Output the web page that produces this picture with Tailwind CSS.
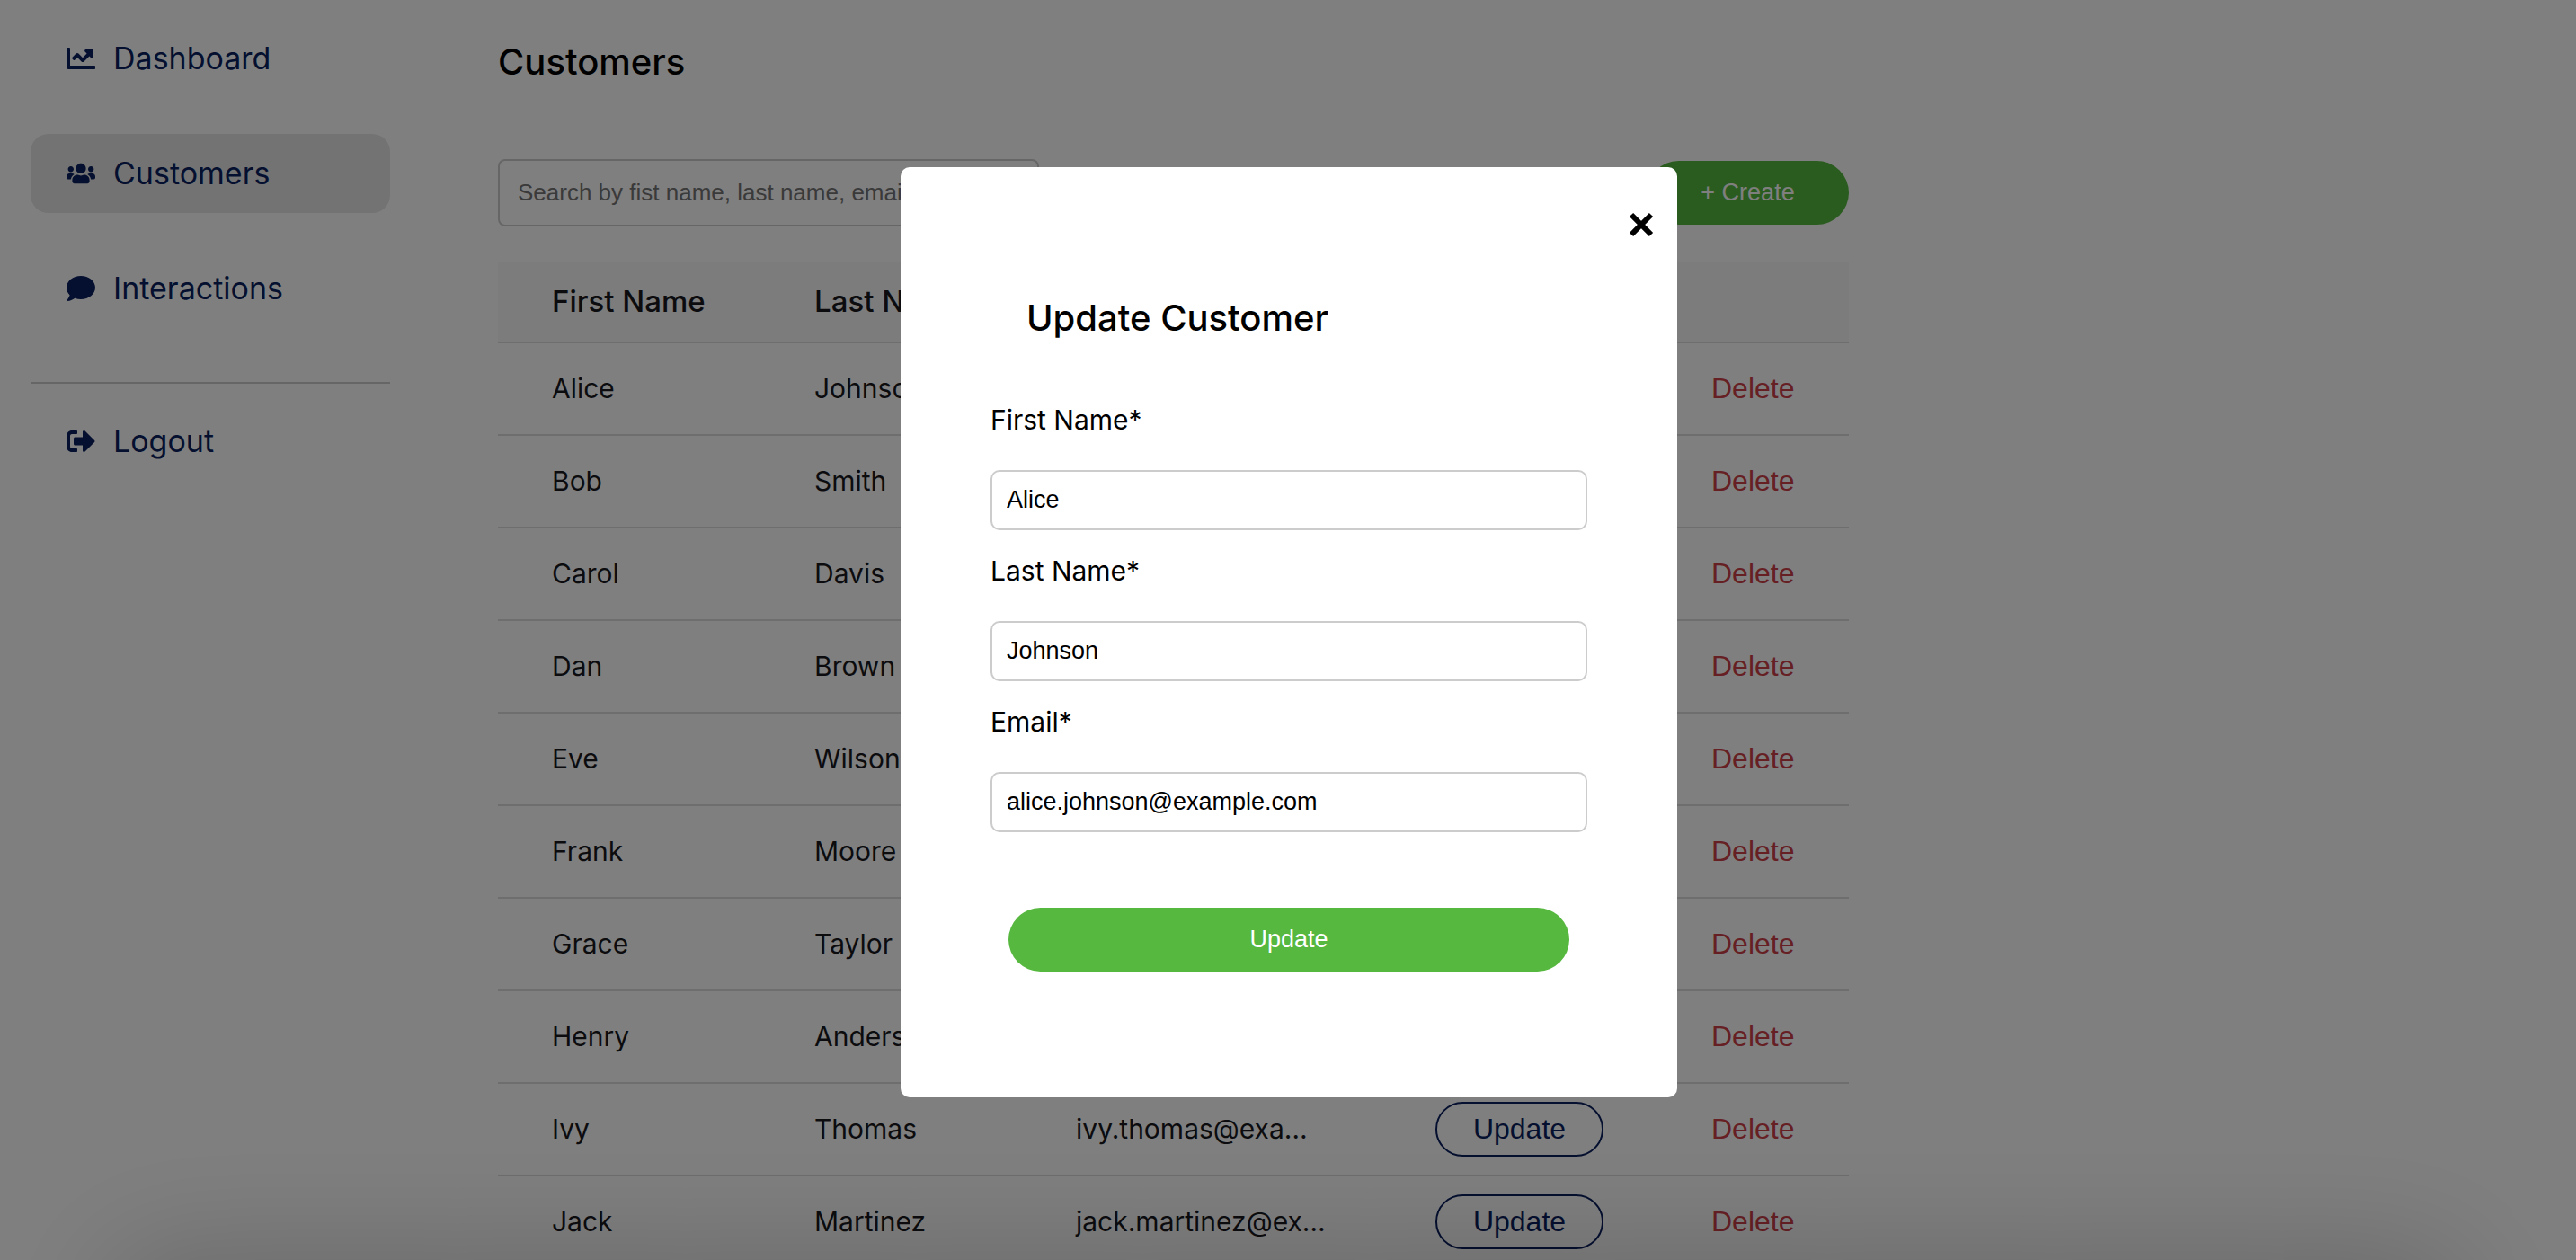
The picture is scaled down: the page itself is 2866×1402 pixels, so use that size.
<!DOCTYPE html>
<html lang="en">
<head>
<meta charset="utf-8">
<meta name="viewport" content="width=device-width, initial-scale=1">
<title>Customers</title>
<script src="https://cdn.jsdelivr.net/npm/@tailwindcss/browser@4"></script>
</head>
<body class="h-screen overflow-hidden bg-white font-[Inter,'Open_Sans',sans-serif] text-black">
<div class="flex items-start">
  <nav class="flex w-[468px] shrink-0 flex-col px-[34px] pt-[21px] text-[34px] leading-10 text-[#0a1f5e]">
    <a href="#" class="flex h-[88px] items-center gap-5 rounded-[20px] px-10">
      <svg class="size-8 shrink-0" viewBox="0 0 512 512" fill="currentColor"><path d="M496 384H64V80c0-8.84-7.16-16-16-16H16C7.16 64 0 71.16 0 80v336c0 17.67 14.33 32 32 32h464c8.84 0 16-7.16 16-16v-32c0-8.84-7.16-16-16-16zM464 96H345.94c-21.38 0-32.09 25.85-16.97 40.97l32.4 32.4L288 242.75l-73.37-73.37c-12.5-12.5-32.76-12.5-45.25 0l-68.69 68.69c-6.25 6.25-6.25 16.38 0 22.63l22.62 22.62c6.25 6.25 16.38 6.25 22.63 0L192 237.25l73.37 73.37c12.5 12.5 32.76 12.5 45.25 0l96-96 32.4 32.4c15.12 15.12 40.97 4.41 40.97-16.97V112c.01-8.84-7.15-16-15.99-16z"/></svg>
      Dashboard</a>
    <a href="#" class="mt-10 flex h-[88px] items-center gap-5 rounded-[20px] bg-[#e6e6e6] px-10">
      <svg class="size-8 shrink-0" viewBox="0 0 640 512" fill="currentColor"><path d="M96 224c35.3 0 64-28.7 64-64s-28.7-64-64-64-64 28.7-64 64 28.7 64 64 64zm448 0c35.3 0 64-28.7 64-64s-28.7-64-64-64-64 28.7-64 64 28.7 64 64 64zm32 32h-64c-17.6 0-33.5 7.1-45.1 18.6 40.3 22.1 68.9 62 75.1 109.4h66c17.7 0 32-14.3 32-32v-32c0-35.3-28.7-64-64-64zm-256 0c61.9 0 112-50.1 112-112S381.9 32 320 32 208 82.1 208 144s50.1 112 112 112zm76.8 32h-8.3c-20.8 10-43.9 16-68.5 16s-47.6-6-68.5-16h-8.3C179.6 288 128 339.6 128 403.2V432c0 26.5 21.5 48 48 48h288c26.5 0 48-21.5 48-48v-28.8c0-63.6-51.6-115.2-115.2-115.2zm-223.7-13.4C161.5 263.1 145.6 256 128 256H64c-35.3 0-64 28.7-64 64v32c0 17.7 14.3 32 32 32h65.9c6.3-47.4 34.9-87.3 75.2-109.4z"/></svg>
      Customers</a>
    <a href="#" class="mt-10 flex h-[88px] items-center gap-5 rounded-[20px] px-10">
      <svg class="size-8 shrink-0" viewBox="0 0 512 512" fill="currentColor"><path d="M256 32C114.6 32 0 125.1 0 240c0 49.6 21.4 95 57 130.7C44.5 421.1 2.7 466 2.2 466.5c-2.2 2.3-2.8 5.7-1.5 8.7S4.8 480 8 480c66.3 0 116-31.8 140.6-51.4 32.7 12.3 69 19.4 107.4 19.4 141.4 0 256-93.1 256-208S397.4 32 256 32z"/></svg>
      Interactions</a>
    <hr class="mt-[60px] mb-5 border-t-2 border-[#ccc]">
    <a href="#" class="flex h-[88px] items-center gap-5 rounded-[20px] px-10">
      <svg class="size-8 shrink-0" viewBox="0 0 512 512" fill="currentColor"><path d="M497 273L329 441c-15 15-41 4.5-41-17v-96H152c-13.3 0-24-10.7-24-24v-96c0-13.3 10.7-24 24-24h136V88c0-21.4 25.9-32 41-17l168 168c9.3 9.4 9.3 24.6 0 34zM192 436v-40c0-6.6-5.4-12-12-12H96c-17.7 0-32-14.3-32-32V160c0-17.7 14.3-32 32-32h84c6.6 0 12-5.4 12-12V76c0-6.6-5.4-12-12-12H96c-53 0-96 43-96 96v192c0 53 43 96 96 96h84c6.6 0 12-5.4 12-12z"/></svg>
      Logout</a>
  </nav>
  <main class="ml-[86px] w-full max-w-[1503px] pt-10">
    <h1 class="text-[40px] leading-[58px] font-medium">Customers</h1>
    <div class="mt-[79px] flex items-center justify-between">
      <input type="search" aria-label="Search customers" placeholder="Search by fist name, last name, email" class="h-[75px] w-[602px] rounded-lg border-2 border-[#ccc] px-5 font-['Liberation_Sans',Arial,sans-serif] text-[26px] placeholder:text-[#757575]">
      <button type="button" class="h-[71px] w-[225px] rounded-full bg-[#56b83f] font-['Liberation_Sans',Arial,sans-serif] text-[27px] text-white">+ Create</button>
    </div>
    <table class="mt-[39px] w-full table-fixed border-collapse text-left text-[30px] text-[#18191f]">
      <colgroup><col class="w-[292px]"><col class="w-[291px]"><col class="w-[400px]"><col class="w-[307px]"><col></colgroup>
      <thead>
        <tr class="h-[90px] border-b-2 border-[#ddd] bg-[#f8f8f8] text-[33px]">
          <th scope="col" class="pl-[60px] font-medium">First Name</th>
          <th scope="col" class="pl-[60px] font-medium">Last Name</th>
          <th scope="col" class="pl-[60px] font-medium">Email</th>
          <td></td><td></td>
        </tr>
      </thead>
      <tbody id="rows"></tbody>
    </table>
  </main>
</div>

<template id="row">
  <tr class="h-[103px] border-b-2 border-[#ddd]">
    <td class="pl-[60px]"></td>
    <td class="pl-[60px]"></td>
    <td class="truncate px-[60px]"></td>
    <td class="px-[60px]"><button type="button" class="block h-[61px] w-[187px] rounded-full border-2 border-[#0a1f5e] pb-0.5 font-['Liberation_Sans',Arial,sans-serif] text-[32px] text-[#0a1f5e]">Update</button></td>
    <td class="pb-0.5 pl-[60px]"><button type="button" class="block font-['Liberation_Sans',Arial,sans-serif] text-[32px] text-[#cc4048]">Delete</button></td>
  </tr>
</template>

<div class="fixed inset-0 flex items-start justify-center bg-black/50 pt-[186px] pl-0.5">
  <div role="dialog" aria-modal="true" aria-labelledby="dialog-title" class="relative flex h-[1035px] w-[864px] flex-col rounded-[10px] bg-white px-[100px] pt-[134px]">
    <button type="button" aria-label="Close" class="absolute top-[50px] right-[26px]">
      <svg class="size-7" viewBox="0 0 28 28" stroke="currentColor" stroke-width="6"><path d="M3 3L25 25M25 3L3 25"/></svg>
    </button>
    <h2 id="dialog-title" class="px-10 text-[40px] leading-[68px] font-medium">Update Customer</h2>
    <form class="mt-[39px] flex flex-col">
      <label for="first" class="text-[30px] leading-[80px]">First Name*</label>
      <input id="first" type="text" value="Alice" class="mt-4 h-[67px] rounded-[10px] border-2 border-[#ccc] px-4 font-['Liberation_Sans',Arial,sans-serif] text-[27px]">
      <label for="last" class="mt-[5px] text-[30px] leading-[80px]">Last Name*</label>
      <input id="last" type="text" value="Johnson" class="mt-4 h-[67px] rounded-[10px] border-2 border-[#ccc] px-4 font-['Liberation_Sans',Arial,sans-serif] text-[27px]">
      <label for="email" class="mt-[5px] text-[30px] leading-[80px]">Email*</label>
      <input id="email" type="email" value="alice.johnson@example.com" class="mt-4 h-[67px] rounded-[10px] border-2 border-[#ccc] px-4 font-['Liberation_Sans',Arial,sans-serif] text-[27px]">
      <button type="submit" class="mx-5 mt-[84px] h-[71px] rounded-full bg-[#56b83f] font-['Liberation_Sans',Arial,sans-serif] text-[27px] text-white">Update</button>
    </form>
  </div>
</div>
<div class="pointer-events-none fixed inset-x-32 top-full h-40 rounded-[40px] shadow-[0_0_140px_rgba(0,0,0,0.2)]"></div>

<script>
  const people = [
    ["Alice", "Johnson"], ["Bob", "Smith"], ["Carol", "Davis"], ["Dan", "Brown"], ["Eve", "Wilson"],
    ["Frank", "Moore"], ["Grace", "Taylor"], ["Henry", "Anderson"], ["Ivy", "Thomas"], ["Jack", "Martinez"],
  ];
  const template = document.getElementById("row");
  for (const [first, last] of people) {
    const row = template.content.cloneNode(true);
    const cells = row.querySelectorAll("td");
    cells[0].textContent = first;
    cells[1].textContent = last;
    cells[2].textContent = `${first}.${last}@example.com`.toLowerCase();
    document.getElementById("rows").append(row);
  }
</script>
</body>
</html>
